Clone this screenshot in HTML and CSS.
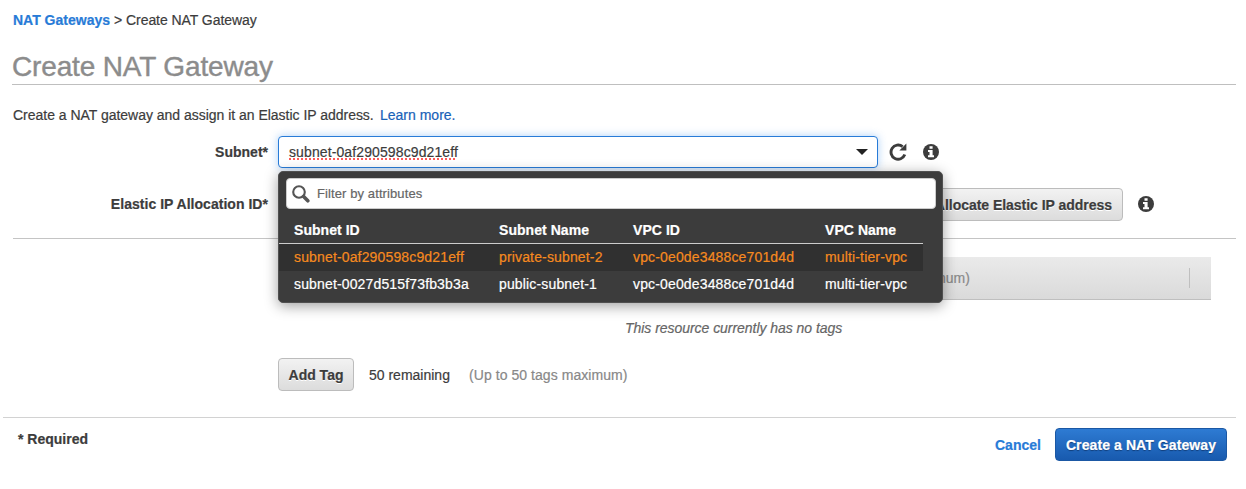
FILE: index.html
```html
<!DOCTYPE html>
<html lang="en">
<head>
<meta charset="utf-8">
<title>Create NAT Gateway</title>
<link rel="stylesheet" href="styles.css">
</head>
<body>
<nav class="crumbs"><a class="crumb-link" href="#">NAT Gateways</a><span class="crumb-sep">&gt;</span><span class="crumb-now">Create NAT Gateway</span></nav>
<h1 class="title"><span>Create NAT Gateway</span></h1>
<p class="intro"><span class="intro-text">Create a NAT gateway and assign it an Elastic IP address.</span><a class="learn" href="#">Learn more.</a></p>

<main class="form">
  <div class="row row-subnet">
    <label class="label"><span>Subnet*</span></label>
    <div class="field">
      <div class="select"><span class="value">subnet-0af290598c9d21eff</span><span class="caret"></span></div>
      <section class="menu">
        <div class="filter">
          <svg class="search" viewBox="0 0 18 18"><circle cx="7" cy="7" r="5.8" fill="none" stroke="#555" stroke-width="2.1"/><path d="M11.6 11.6L15.8 15.8" stroke="#555" stroke-width="3.6" stroke-linecap="round"/></svg>
          <span class="placeholder">Filter by attributes</span>
        </div>
        <div class="options">
          <div class="option head"><span>Subnet ID</span><span>Subnet Name</span><span>VPC ID</span><span>VPC Name</span></div>
          <div class="option active"><span>subnet-0af290598c9d21eff</span><span>private-subnet-2</span><span>vpc-0e0de3488ce701d4d</span><span>multi-tier-vpc</span></div>
          <div class="option"><span>subnet-0027d515f73fb3b3a</span><span>public-subnet-1</span><span>vpc-0e0de3488ce701d4d</span><span>multi-tier-vpc</span></div>
        </div>
      </section>
    </div>
    <svg class="refresh" viewBox="0 0 18 18"><path d="M15.8 11.6A7.1 7.1 0 1 1 13.6 3.6" fill="none" stroke="#3c3c3c" stroke-width="2.9"/><path d="M17.4 .6V7.6H10.4Z" fill="#3c3c3c"/></svg>
    <svg class="info" viewBox="0 0 16 16"><circle cx="8" cy="8" r="8" fill="#3c3c3c"/><path d="M6.5 2.2H9.6V4.8H6.5ZM5 6H9.6V11.3H11V13.2H5V11.3H6.5V7.9H5Z" fill="#fff"/></svg>
  </div>
  <div class="row row-eip">
    <label class="label"><span>Elastic IP Allocation ID*</span></label>
    <div class="select plain"></div>
    <button class="button allocate"><span>Allocate Elastic IP address</span></button>
    <svg class="info" viewBox="0 0 16 16"><circle cx="8" cy="8" r="8" fill="#3c3c3c"/><path d="M6.5 2.2H9.6V4.8H6.5ZM5 6H9.6V11.3H11V13.2H5V11.3H6.5V7.9H5Z" fill="#fff"/></svg>
  </div>
  <section class="tags">
    <div class="tags-head"><span class="max">num)</span><i class="divider"></i></div>
    <p class="empty"><span>This resource currently has no tags</span></p>
    <div class="tags-add">
      <button class="button add"><span>Add Tag</span></button>
      <span class="remaining">50 remaining</span>
      <span class="limit">(Up to 50 tags maximum)</span>
    </div>
  </section>
</main>

<footer class="footer">
  <span class="required">* Required</span>
  <div class="actions"><a class="cancel" href="#">Cancel</a><button class="button primary"><span>Create a NAT Gateway</span></button></div>
</footer>
</body>
</html>
```
FILE: styles.css
```css
* { box-sizing: border-box; }
body {
  margin: 0;
  height: 489px;
  overflow: hidden;
  background: #fff;
  color: #3c3c3c;
  font: 14px/20px "Liberation Sans", Arial, sans-serif;
  -webkit-text-stroke: .2px;
  white-space: nowrap;
}
a { text-decoration: none; }
svg { display: block; flex: none; }

.crumbs { display: flex; height: 40px; padding: 10px 0 0 13px; }
.crumb-link { width: 101px; color: #287bd7; font-weight: bold; }
.crumb-sep { width: 12px; }
.crumb-now { letter-spacing: -.06px; }
.title {
  display: flex;
  align-items: flex-end;
  height: 45px;
  margin: 0 10px 0 12px;
  border-bottom: 1px solid #bfbfbf;
  color: #8c8c8c;
  font-size: 28px;
  font-weight: normal;
  line-height: 34px;
  letter-spacing: -.15px;
  -webkit-text-stroke: .4px;
}
.intro { display: flex; height: 51px; margin: 0; padding: 20px 0 0 13px; }
.intro-text { width: 367px; letter-spacing: -.02px; }
.learn { color: #1962b8; }

.form { height: 332px; }
.row { display: flex; align-items: center; }
.row-subnet { height: 32px; }
.row-eip {
  height: 71px;
  margin: 0 10px 0 13px;
  padding-top: 2px;
  border-bottom: 1px solid #c4c4c4;
}
.label { width: 268px; text-align: right; font-weight: bold; }
.field { position: relative; width: 600px; margin-left: 10px; }
.select {
  display: flex;
  align-items: center;
  justify-content: space-between;
  width: 600px;
  height: 32px;
  padding: 0 9px 0 10px;
  border: 1px solid #287bd7;
  border-radius: 4px;
  background: #fff;
  box-shadow: 0 0 9px rgba(70, 150, 240, .45);
}
.value {
  letter-spacing: .11px;
  text-decoration: underline dotted #ff5a5a 2px;
  text-decoration-skip-ink: none;
  text-underline-offset: 1px;
}
.caret { border: 6px solid transparent; border-top-color: #222; border-bottom: 0; }
.refresh { width: 18px; height: 18px; margin-left: 11px; }
.info { width: 16px; height: 16px; margin-left: 16px; }

.menu {
  position: absolute;
  top: 35px;
  left: 0;
  z-index: 2;
  width: 665px;
  height: 132px;
  padding: 6px 6px 7px 7px;
  border: 1px solid #505050;
  border-radius: 5px;
  background: #3c3c3c;
  box-shadow: 0 3px 14px rgba(0, 0, 0, .38);
}
.filter {
  display: flex;
  align-items: center;
  height: 31px;
  padding-left: 5px;
  border: 1px solid #ccc;
  border-radius: 4px;
  background: #fff;
}
.search { width: 18px; height: 18px; }
.placeholder { margin-left: 7px; color: #666; font-size: 13px; letter-spacing: .1px; }
.options { width: 644px; margin: 8px 0 0 -7px; }
.option {
  display: grid;
  grid-template-columns: 205px 134px 192px 98px;
  align-items: center;
  height: 27px;
  padding: 0 0 1px 15px;
  color: #fff;
  letter-spacing: .15px;
}
.head { padding-bottom: 0; border-bottom: 1px solid #ccc; font-weight: bold; letter-spacing: .05px; }
.active { background: #303030; color: #f68a1f; }

.row-eip .label { width: 255px; letter-spacing: .03px; }
.row-eip .info { margin-left: 15px; }
.plain { margin-left: 10px; border-color: #bbb; box-shadow: none; }
.button {
  display: flex;
  align-items: center;
  justify-content: center;
  height: 33px;
  padding: 0;
  border: 1px solid #bcbcbc;
  border-radius: 4px;
  background: linear-gradient(#f2f2f2, #dcdcdc);
  color: #3c3c3c;
  font: bold 14px/20px "Liberation Sans", Arial, sans-serif;
  text-shadow: 0 1px #fff;
}
.allocate {
  justify-content: flex-end;
  width: 205px;
  margin-left: 40px;
  padding: 2px 10px 0 0;
  letter-spacing: -.03px;
}

.tags { padding: 18px 35px 0 278px; }
.tags-head {
  display: flex;
  align-items: center;
  height: 43px;
  padding: 0 21px 0 660px;
  border-bottom: 1px solid #bfbfbf;
  background: linear-gradient(#eaeaea, #dadada);
  color: #8a8a8a;
}
.divider { width: 1px; height: 20px; margin-left: auto; background: #bfbfbf; }
.empty { height: 58px; margin: 0; padding: 18px 0 0 347px; color: #666; font-style: italic; letter-spacing: -.04px; }
.tags-add { display: flex; align-items: center; }
.add { width: 76px; }
.remaining { width: 100px; margin-left: 15px; }
.limit { color: #888; letter-spacing: .06px; }

.footer {
  display: flex;
  justify-content: space-between;
  margin: -51px 10px 0 3px;
  padding: 10px 9px 0 15px;
  border-top: 1px solid #d2d2d2;
}
.required { padding-top: 1px; font-weight: bold; }
.actions { display: flex; align-items: center; }
.cancel { width: 60px; color: #287bd7; font-weight: bold; }
.primary {
  width: 172px;
  border-color: #1b58a4;
  background: linear-gradient(#2e7bd3, #185aae);
  color: #fff;
  letter-spacing: .09px;
  text-shadow: 0 1px 1px #123e7a;
}
```
